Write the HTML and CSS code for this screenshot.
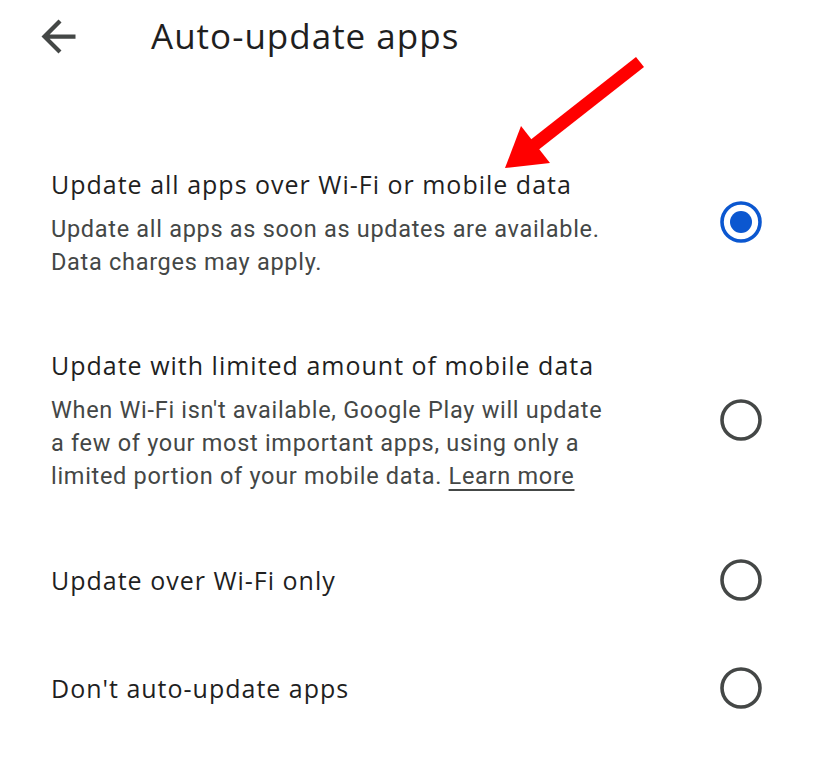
FILE: index.html
```html
<!DOCTYPE html>
<html lang="en">
<head>
<meta charset="utf-8">
<title>Auto-update apps</title>
<link rel="stylesheet" href="styles.css">
</head>
<body>
<div class="screen">
  <header class="topbar">
    <svg class="back" viewBox="0 0 24 24" aria-hidden="true"><path d="M20 11H7.83l5.59-5.59L12 4l-8 8 8 8 1.41-1.41L7.83 13H20v-2z"/></svg>
    <h1 class="title">Auto-update apps</h1>
  </header>

  <main class="options">
    <div class="option first">
      <div class="text">
        <div class="label">Update all apps over Wi-Fi or mobile data</div>
        <div class="desc">Update all apps as soon as updates are available.<br>Data charges may apply.</div>
      </div>
      <svg class="radio on" viewBox="0 0 48 48" aria-hidden="true"><circle cx="24" cy="24" r="19" /><circle class="dot" cx="24" cy="24" r="11"/></svg>
    </div>

    <div class="option second">
      <div class="text">
        <div class="label">Update with limited amount of mobile data</div>
        <div class="desc">When Wi-Fi isn't available, Google Play will update<br>a few of your most important apps, using only a<br>limited portion of your mobile data. <span class="link">Learn more</span></div>
      </div>
      <svg class="radio" viewBox="0 0 48 48" aria-hidden="true"><circle cx="24" cy="24" r="19" /></svg>
    </div>

    <div class="option third">
      <div class="text">
        <div class="label">Update over Wi-Fi only</div>
      </div>
      <svg class="radio" viewBox="0 0 48 48" aria-hidden="true"><circle cx="24" cy="24" r="19" /></svg>
    </div>

    <div class="option fourth">
      <div class="text">
        <div class="label">Don't auto-update apps</div>
      </div>
      <svg class="radio" viewBox="0 0 48 48" aria-hidden="true"><circle cx="24" cy="24" r="19" /></svg>
    </div>
  </main>

  <svg class="pointer" viewBox="0 0 825 768" aria-hidden="true">
    <line x1="640" y1="62" x2="533" y2="146" />
    <polygon points="505,168 521,126 550,163" />
  </svg>
</div>
</body>
</html>
```

FILE: styles.css
```css
* { box-sizing: border-box; }
html, body { margin: 0; padding: 0; background: #ffffff; }
body {
  font-family: Roboto, "Noto Sans", "Liberation Sans", sans-serif;
  color: #1f1f1f;
}
.screen {
  position: relative;
  width: 825px;
  height: 768px;
  overflow: hidden;
}
.topbar {
  display: flex;
  align-items: center;
  height: 72px;
  padding-left: 33px;
}
.back {
  width: 51px;
  height: 51px;
  fill: #444746;
  flex: none;
}
.title {
  margin: 0 0 0 67px;
  font-family: "Open Sans", Roboto, sans-serif;
  font-size: 35px;
  font-weight: 400;
  letter-spacing: 1px;
  line-height: 44px;
  color: #1f1f1f;
}
.options {
  display: flex;
  flex-direction: column;
  padding: 0 51px;
}
.option {
  display: flex;
  align-items: center;
  justify-content: space-between;
  padding: 30px 0;
}
.option.first { padding-top: 96px; padding-bottom: 36px; }
.option.second { padding-top: 34px; padding-bottom: 31.5px; }
.option.third { padding-top: 31px; }
.option.fourth { padding-top: 29px; }
.text { display: flex; flex-direction: column; }
.label {
  font-family: "Open Sans", Roboto, sans-serif;
  font-size: 25px;
  letter-spacing: 1px;
  line-height: 32px;
}
.desc {
  margin-top: 13px;
  font-size: 23.5px;
  letter-spacing: 0.7px;
  line-height: 33px;
  color: #444746;
}
.link {
  text-decoration: underline;
  text-decoration-thickness: 2px;
  text-underline-offset: 5px;
}
.radio {
  width: 48px;
  height: 48px;
  flex: none;
  margin: 0 9px 3px 0;
  fill: none;
  stroke: #444746;
  stroke-width: 3.6;
}
.option.second .radio { margin-bottom: 2px; }
.option.third .radio { margin-bottom: 1px; }
.option.fourth .radio { margin-bottom: 0; }
.radio.on { stroke: #0b57d0; }
.radio .dot { fill: #0b57d0; stroke: none; }
.pointer {
  position: absolute;
  left: 0;
  top: 0;
  width: 825px;
  height: 768px;
  pointer-events: none;
}
.pointer line { stroke: #ff0000; stroke-width: 13; }
.pointer polygon { fill: #ff0000; }
```
